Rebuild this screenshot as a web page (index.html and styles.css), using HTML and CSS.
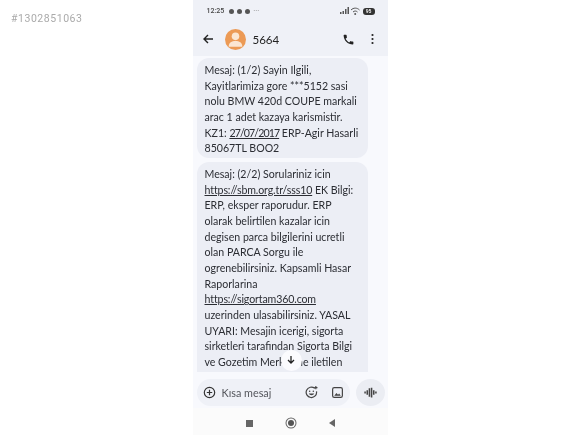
FILE: index.html
```html
<!DOCTYPE html>
<html>
<head>
  <meta charset="UTF-8">
  <link rel="stylesheet" href="styles.css">
</head>
<body>
  <div class="page">
    <div class="listing-no">#1302851063</div>
    <div class="phone">
      <div class="top">
        <div class="status">
          <span class="time">12:25</span>
          <span class="dot"></span><span class="dot"></span><span class="dot"></span>
          <span class="more">···</span>
          <svg class="signal" width="20" height="8" viewBox="0 0 20 8">
            <path d="M0 7h1.500V5H0zM2.500 7H4V4H2.500zM5 7h1.500V2H5zM7.500 7H9V0H7.500z" fill="#555"/>
            <path d="M11 3c2.500-2.500 6-2.500 8.500 0M13 5c1.500-1.300 3-1.300 4.500 0" stroke="#555" fill="none"/>
            <circle cx="15.200" cy="7" r="1" fill="#555"/>
          </svg>
          <span class="battery">95</span>
        </div>
        <div class="appbar">
          <svg class="back" width="12" height="12" viewBox="0 0 12 12">
            <path d="M11 6H2M6 2L2 6l4 4" stroke="#222" stroke-width="1.400" fill="none"/>
          </svg>
          <div class="avatar">
            <svg width="21" height="21" viewBox="0 0 20 20">
              <circle cx="10" cy="7" r="3.600" fill="#fbe6d2"/>
              <path d="M3.500 17c0-4 3-5.500 6.500-5.500s6.500 1.500 6.500 5.500z" fill="#fbe6d2"/>
            </svg>
          </div>
          <span class="name">5664</span>
          <svg class="call" width="13" height="13" viewBox="0 0 24 24">
            <path d="M6.600 10.800c1.400 2.800 3.800 5.100 6.600 6.600l2.200-2.200c.3-.3.700-.4 1-.2 1.100.4 2.300.6 3.600.6.600 0 1 .4 1 1V20c0 .6-.4 1-1 1C10.600 21 3 13.400 3 4c0-.6.400-1 1-1h3.500c.6 0 1 .4 1 1 0 1.300.2 2.500.6 3.600.1.300 0 .7-.2 1z" fill="#222"/>
          </svg>
          <svg class="menu" width="3" height="12" viewBox="0 0 3 12">
            <circle cx="1.500" cy="2" r="1.100" fill="#222"/>
            <circle cx="1.500" cy="6" r="1.100" fill="#222"/>
            <circle cx="1.500" cy="10" r="1.100" fill="#222"/>
          </svg>
        </div>
      </div>

      <div class="thread">
        <div class="bubble">Mesaj: (1/2) Sayin Ilgili, Kayitlarimiza gore ***5152 sasi nolu BMW 420d COUPE markali arac 1 adet kazaya karismistir. KZ1: <u class="date">27/07/2017</u> ERP-Agir Hasarli 85067TL BOO2</div>
        <div class="bubble cut">Mesaj: (2/2) Sorulariniz icin <u>https://sbm.org.tr/sss10</u> EK Bilgi: ERP, eksper raporudur. ERP olarak belirtilen kazalar icin degisen parca bilgilerini ucretli olan PARCA Sorgu ile ogrenebilirsiniz. Kapsamli Hasar Raporlarina <u>https://sigortam360.com</u> uzerinden ulasabilirsiniz. YASAL UYARI: Mesajin icerigi, sigorta sirketleri tarafindan Sigorta Bilgi ve Gozetim Merkezine iletilen</div>
        <div class="scroll-down">
          <svg width="10" height="10" viewBox="0 0 10 10">
            <path d="M5 0v7M2 4l3 3 3-3" stroke="#222" stroke-width="1.300" fill="none"/>
          </svg>
        </div>
      </div>

      <div class="composer">
        <div class="input">
          <svg width="13" height="13" viewBox="0 0 12 12">
            <circle cx="6" cy="6" r="4.800" stroke="#333" stroke-width="1.100" fill="none"/>
            <path d="M6 3.500v5M3.500 6h5" stroke="#333" stroke-width="1.100"/>
          </svg>
          <span class="placeholder">Kısa mesaj</span>
          <svg class="emoji" width="13" height="13" viewBox="0 0 12 12">
            <path d="M9 2.200A4.800 4.800 0 1 0 10.600 5" stroke="#444" stroke-width="1.100" fill="none"/>
            <path d="M3.500 7c1 2 4 2 5 0z" fill="#444"/>
            <circle cx="4.300" cy="4.800" r=".7" fill="#444"/>
            <circle cx="7.700" cy="4.800" r=".7" fill="#444"/>
            <path d="M10 0v3M8.500 1.500h3" stroke="#444"/>
          </svg>
          <svg class="gallery" width="13" height="13" viewBox="0 0 12 12">
            <rect x="1.500" y="1.500" width="9" height="9" rx="1.500" stroke="#444" stroke-width="1.100" fill="none"/>
            <path d="M3 9l2-2.500 1.500 1.500 1-1L9 9z" fill="#444"/>
          </svg>
        </div>
        <div class="voice">
          <svg width="13" height="13" viewBox="0 0 12 12">
            <path d="M1 5v2M3 4v4M5 2v8M7 1.500v9M9 4v4M11 5v2" stroke="#444" stroke-width="1.400"/>
          </svg>
        </div>
      </div>

      <div class="navbar">
        <span class="nav-square"></span>
        <span class="nav-circle"></span>
        <span class="nav-back"></span>
      </div>
    </div>
  </div>
</body>
</html>
```

FILE: styles.css
```css
html, body { margin: 0; padding: 0; background: #fff; }
body { font-family: Lato, "Liberation Sans", sans-serif; color: #2b2d33; }
.page { position: relative; width: 580px; height: 435px; display: flex; justify-content: center; overflow: hidden; }
.listing-no { position: absolute; left: 11px; top: 12px; font-family: Roboto, sans-serif; font-size: 10.500px; letter-spacing: .55px; color: #aaa; filter: blur(.4px); }

.phone { width: 195px; height: 435px; display: flex; flex-direction: column; background: #f8f9fd; filter: blur(.35px); }

.top { height: 56px; background: #eff1f7; flex: none; }
.status { height: 22px; padding: 0 13px 0 14px; display: flex; align-items: center; gap: 3px; font-family: Roboto, sans-serif; font-size: 7px; font-weight: 500; color: #444; }
.time { margin-right: 2px; }
.dot { width: 5px; height: 5px; border-radius: 50%; background: #555; }
.more { margin-right: auto; color: #888; }
.battery { width: 12px; height: 7px; border-radius: 3px; background: #333; color: #fff; font-size: 5px; line-height: 7px; text-align: center; }

.appbar { height: 34px; padding: 0 14px 0 9px; display: flex; align-items: center; }
.avatar { width: 21px; height: 21px; margin-left: 11px; border-radius: 50%; background: #ec9a55; }
.name { margin-left: 7px; font-size: 11.500px; color: #222; margin-right: auto; }
.menu { margin-left: 16px; }

.thread { position: relative; height: 316px; padding: 2px 0 0 4px; overflow: hidden; flex: none; box-sizing: border-box; }
.bubble { box-sizing: border-box; width: 171px; padding: 5px 9px 1px 8px; margin-bottom: 4px; background: #eceef5; border-radius: 12px; font-size: 10.600px; line-height: 15.650px; }
.bubble u { text-underline-offset: 1px; letter-spacing: -.12px; }
.bubble u.date { letter-spacing: -.9px; }
.bubble.cut { border-radius: 12px 12px 0 0; padding-bottom: 2px; margin-bottom: 0; }
.scroll-down { position: absolute; left: 88px; top: 294px; width: 21px; height: 21px; border-radius: 50%; background: #fbfbfe; display: flex; align-items: center; justify-content: center; }

.composer { height: 27px; padding: 0 3px 2px 4px; margin-top: 7px; display: flex; gap: 6px; flex: none; }
.input { flex: 1; display: flex; align-items: center; gap: 6px; padding: 0 6px 0 6px; background: #eff1f7; border-radius: 14px; }
.placeholder { font-size: 10.800px; color: #55575d; margin-right: auto; }
.emoji { margin-right: 7px; }
.voice { width: 29px; background: #ebedf3; border-radius: 50%; display: flex; align-items: center; justify-content: center; }

.navbar { flex: 1; padding-top: 3px; display: flex; align-items: center; justify-content: center; gap: 35px; background: #fbfbfb; }
.nav-square { width: 7px; height: 7px; background: #666; }
.nav-circle { width: 6px; height: 6px; border-radius: 50%; background: #555; box-shadow: 0 0 0 1.500px #fbfbfb, 0 0 0 2.500px #666; }
.nav-back { width: 0; height: 0; border: 4px solid transparent; border-left: 0; border-right: 6px solid #666; }
```
